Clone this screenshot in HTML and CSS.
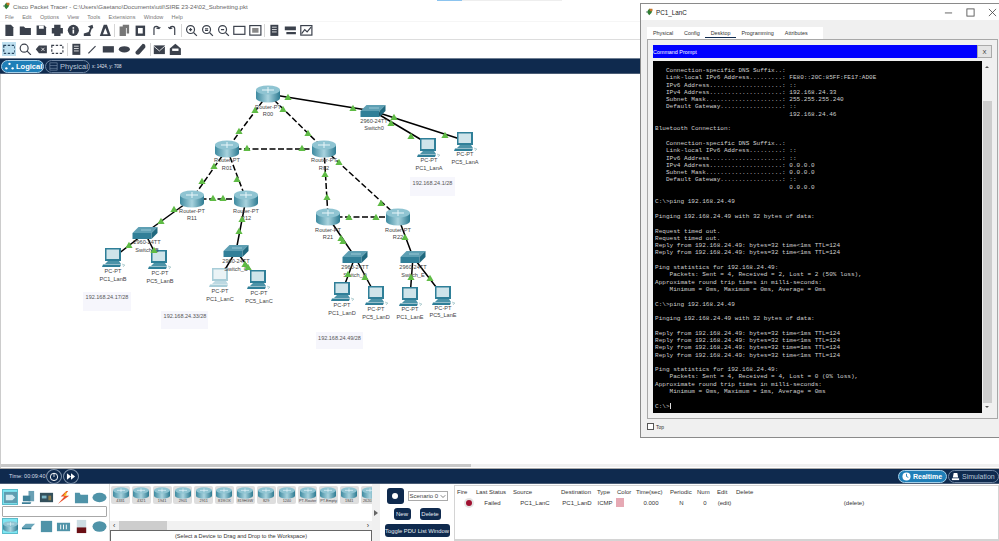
FILE: index.html
```html
<!DOCTYPE html>
<html lang="en">
<head>
<meta charset="utf-8">
<title>Cisco Packet Tracer</title>
<link rel="stylesheet" href="styles.css">
</head>
<body>
<svg class="defs" aria-hidden="true">
  <defs>
    <linearGradient id="rg" x1="0" x2="1" y1="0" y2="0">
      <stop offset="0" stop-color="#3d8aa0"/><stop offset=".5" stop-color="#a9d3de"/><stop offset="1" stop-color="#2d7b92"/>
    </linearGradient>
    <polygon id="tri" points="-3.6,3 0,-3.2 3.6,3" fill="#5fbb45"/>
    <g id="router">
      <path d="M-12-4V4A12 4.6 0 0 0 12 4V-4Z" fill="url(#rg)"/>
      <ellipse cy="-4" rx="12" ry="4.6" fill="#8fc4d2"/>
      <path d="M-6-4H6M0-7V-1" stroke="#e8f6fa" stroke-width="1"/>
    </g>
    <g id="switch">
      <polygon points="-6.500,-6 12.500,-6 6.500,0 -12.500,0" fill="#5e9fb3"/>
      <polygon points="-12.500,0 6.500,0 6.500,6 -12.500,6" fill="#317f98"/>
      <polygon points="6.500,0 12.500,-6 12.500,0 6.500,6" fill="#20697f"/>
      <path d="M-4-3H6" stroke="#a8d2de" stroke-width=".8"/>
    </g>
    <g id="pc">
      <rect x="-8" y="-10" width="16" height="13" fill="#2f7f98"/>
      <rect x="-6.500" y="-8.500" width="12.500" height="9.500" fill="#cfe4ea"/>
      <polygon points="-5,3 6,3 8,6 -8,6" fill="#4c93a8"/>
      <polygon points="-10,6.500 8,6.500 7,9 -11,9" fill="#2f7f98"/>
      <path d="M9 6l3 1-2 2" fill="#dbe9ee" stroke="#7aa" stroke-width=".4"/>
    </g>
    <g id="pcpale">
      <rect x="-8" y="-10" width="16" height="13" fill="#a8cdd8"/>
      <rect x="-6.500" y="-8.500" width="12.500" height="9.500" fill="#eaf3f6"/>
      <polygon points="-5,3 6,3 8,6 -8,6" fill="#bcd9e2"/>
      <polygon points="-10,6.500 8,6.500 7,9 -11,9" fill="#a8cdd8"/>
    </g>
    <symbol id="tile" viewBox="-12 -9 24 18"><use href="#router"/></symbol>
  </defs>
</svg>

<div class="app">
  <div class="titlebar">
    <svg class="appicon" viewBox="0 0 10 10"><path d="M1 5l3-4 4 1-1 4-3 3z" fill="#2e7d32"/><path d="M4 1h4v3H5z" fill="#c9742a"/><path d="M0 4h2v2H0z" fill="#9aa"/></svg>
    <span>Cisco Packet Tracer - C:\Users\Gaetano\Documents\util\SIRE 23-24\02_Subnetting.pkt</span>
    <i class="titleprogress"></i>
  </div>
  <nav class="menu">
    <span>File</span><span>Edit</span><span>Options</span><span>View</span><span>Tools</span><span>Extensions</span><span>Window</span><span>Help</span>
  </nav>
  <div class="toolbar tb-main">
    <svg viewBox="0 0 16 16"><path d="M3 1h7l3 3v11H3z"/></svg>
    <svg viewBox="0 0 16 16"><path d="M1 3h5l2 2h7v9H1z"/></svg>
    <svg viewBox="0 0 16 16"><path d="M2 2h10l2 2v10H2z"/><rect x="5" y="2" width="6" height="4" fill="#fff"/></svg>
    <svg viewBox="0 0 16 16"><path d="M4 1h8v4h3v7h-3v3H4v-3H1V5h3z"/></svg>
    <svg viewBox="0 0 16 16"><circle cx="8" cy="8" r="7"/><rect x="7" y="7" width="2" height="5" fill="#fff"/><rect x="7" y="4" width="2" height="2" fill="#fff"/></svg>
    <svg viewBox="0 0 16 16"><path d="M1 15v-3l6-2 2-5-3-2 6-2 1 4-2 1-2 6 1 3z"/></svg>
    <svg viewBox="0 0 16 16"><path d="M6 1h4l5 14H1z"/><path d="M8 5l3 8H5z" fill="#fff"/></svg>
    <b class="sep"></b>
    <svg viewBox="0 0 16 16"><path d="M2 3h8v12H2zM6 1h8v11h-3V5H6z" fill="#777"/></svg>
    <svg viewBox="0 0 16 16"><path d="M2 2h12v13H2z"/><rect x="5" y="5" width="6" height="7" fill="#fff"/></svg>
    <svg class="line" viewBox="0 0 16 16"><path d="M5 14V6a3 3 0 0 1 6 0M11 6l-3-1M11 6l2-2"/></svg>
    <svg class="line" viewBox="0 0 16 16"><path d="M11 14V6a3 3 0 0 0-6 0M5 6l3-1M5 6L3 4"/></svg>
    <b class="sep"></b>
    <svg class="line" viewBox="0 0 16 16"><circle cx="7" cy="7" r="5"/><path d="M11 11l4 4M5 7h4M7 5v4"/></svg>
    <svg class="line" viewBox="0 0 16 16"><circle cx="7" cy="7" r="5"/><path d="M11 11l4 4M5 6h4M5 8h4"/></svg>
    <svg class="line" viewBox="0 0 16 16"><circle cx="7" cy="7" r="5"/><path d="M11 11l4 4M5 7h4"/></svg>
    <svg class="line" viewBox="0 0 16 16"><rect x="1" y="3" width="14" height="10"/></svg>
    <svg class="line" viewBox="0 0 16 16"><rect x="1" y="2" width="14" height="12"/><rect x="4" y="5" width="8" height="6" fill="#888" stroke="none"/></svg>
    <b class="sep"></b>
    <svg viewBox="0 0 16 16"><path d="M3 1h10v14H3z"/><path d="M5 4h6M5 7h6M5 10h6" stroke="#fff"/></svg>
    <svg viewBox="0 0 16 16"><path d="M1 3h14v5H1zM3 10h12v3H3z"/></svg>
    <svg class="line" viewBox="0 0 16 16"><rect x="1" y="2" width="14" height="12"/><path d="M2 12l4-5 3 3 5-6"/></svg>
  </div>
  <div class="toolbar tb-draw">
    <span class="selected"><svg class="line dash" viewBox="0 0 16 16"><rect x="1" y="3" width="14" height="10"/></svg></span>
    <svg class="line" viewBox="0 0 16 16"><circle cx="6.500" cy="6.500" r="5"/><path d="M10 10l5 5"/></svg>
    <svg viewBox="0 0 16 16"><path d="M5 3h10v10H5L1 8z"/><path d="M8 6l4 4M12 6l-4 4" stroke="#fff"/></svg>
    <svg class="line dash" viewBox="0 0 16 16"><rect x="1" y="3" width="14" height="10"/></svg>
    <b class="sep"></b>
    <svg viewBox="0 0 16 16"><path d="M3 1h10v14H3z"/><path d="M5 4h6M5 7h6M5 10h6" stroke="#fff"/></svg>
    <svg class="line" viewBox="0 0 16 16"><path d="M3 13L12 4"/></svg>
    <svg viewBox="0 0 16 16"><rect x="1" y="4" width="14" height="8"/></svg>
    <svg viewBox="0 0 16 16"><ellipse cx="8" cy="8" rx="7" ry="4"/></svg>
    <svg viewBox="0 0 16 16"><path d="M11 1c3 0 4 3 3 5l-7 8c-2 2-6 0-5-3z"/></svg>
    <b class="sep"></b>
    <svg viewBox="0 0 16 16"><path d="M1 3h14v11H1z"/><path d="M1 4l7 6 7-6" stroke="#fff" fill="none"/></svg>
    <svg viewBox="0 0 16 16"><path d="M1 7l7-6 7 6v8H1z"/><path d="M4 7h8v3H4z" fill="#fff"/></svg>
  </div>
  <div class="navbar">
    <span class="pill pill-on"><svg viewBox="0 0 10 10"><circle cx="5" cy="2" r="1.300"/><circle cx="1.500" cy="7" r="1.300"/><circle cx="8.500" cy="7" r="1.300"/></svg>Logical</span>
    <span class="pill pill-off"><svg viewBox="0 0 10 10"><rect x="1" y="1" width="8" height="8" fill="none" stroke="#8fa4bd" stroke-width=".6"/><path d="M1 4h8M1 7h8" stroke="#8fa4bd" stroke-width=".6"/></svg>Physical</span>
    <span class="coords">x: 1424, y: 708</span>
  </div>

  <main class="canvas">
    <svg class="diagram" viewBox="0 75 640 390" role="img" aria-label="Network topology">
      <g class="notes">
        <rect x="410" y="178" width="45" height="19"/>
        <rect x="83" y="293" width="48" height="19"/>
        <rect x="161" y="312" width="47" height="18"/>
        <rect x="316" y="333" width="47" height="17"/>
      </g>
      <g class="solid">
        <path d="M268 95L373 112M373 112L425 143M373 112L460 140"/>
        <path d="M192 200L145 234M145 234L113 259M145 234L159 262"/>
        <path d="M246 200L236 252M236 252L220 279M236 252L258 281"/>
        <path d="M328 218L355 258M355 258L342 293M355 258L376 297"/>
        <path d="M398 218L413 258M413 258L410 298M413 258L443 297"/>
      </g>
      <g class="dashed">
        <path d="M268 95L227 150M268 95L324 150M227 150L324 150"/>
        <path d="M227 150L192 200M227 150L246 200M192 200L246 200"/>
        <path d="M324 150L328 218M324 150L398 218M328 218L398 218"/>
      </g>
      <use href="#router" x="268" y="95"/><use href="#router" x="227" y="150"/><use href="#router" x="324" y="150"/>
      <use href="#router" x="192" y="200"/><use href="#router" x="246" y="200"/><use href="#router" x="328" y="218"/><use href="#router" x="398" y="218"/>
      <use href="#switch" x="373" y="112"/><use href="#switch" x="145" y="234"/><use href="#switch" x="236" y="252"/><use href="#switch" x="355" y="258"/><use href="#switch" x="413" y="258"/>
      <use href="#pc" x="428" y="149"/><use href="#pc" x="465" y="143"/><use href="#pc" x="113" y="259"/><use href="#pc" x="159" y="261"/>
      <use href="#pcpale" x="220" y="279"/><use href="#pc" x="258" y="281"/><use href="#pc" x="342" y="293"/><use href="#pc" x="376" y="297"/><use href="#pc" x="410" y="298"/><use href="#pc" x="443" y="297"/>
      <g class="labels">
        <text x="268" y="110">Router-PT</text><text x="268" y="117">R00</text>
        <text x="227" y="163">Router-PT</text><text x="227" y="171">R01</text>
        <text x="324" y="163">Router-PT</text><text x="324" y="171">R02</text>
        <text x="192" y="214">Router-PT</text><text x="192" y="221">R11</text>
        <text x="246" y="214">Router-PT</text><text x="246" y="221">R12</text>
        <text x="328" y="233">Router-PT</text><text x="328" y="240">R21</text>
        <text x="398" y="233">Router-PT</text><text x="398" y="240">R22</text>
        <text x="374" y="124">2960-24TT</text><text x="374" y="131">Switch0</text>
        <text x="147" y="245">2960-24TT</text><text x="147" y="253">Switch_B</text>
        <text x="236" y="264">2960-24TT</text><text x="236" y="272">Switch_C</text>
        <text x="355" y="270">2960-24TT</text><text x="355" y="278">Switch_D</text>
        <text x="413" y="270">2960-24TT</text><text x="413" y="278">Switch_E</text>
        <text x="429" y="163">PC-PT</text><text x="429" y="171">PC1_LanA</text>
        <text x="465" y="157">PC-PT</text><text x="465" y="165">PC5_LanA</text>
        <text x="113" y="274">PC-PT</text><text x="113" y="282">PC1_LanB</text>
        <text x="160" y="276">PC-PT</text><text x="160" y="284">PC5_LanB</text>
        <text x="220" y="294">PC-PT</text><text x="220" y="302">PC1_LanC</text>
        <text x="259" y="296">PC-PT</text><text x="259" y="304">PC5_LanC</text>
        <text x="342" y="308">PC-PT</text><text x="342" y="316">PC1_LanD</text>
        <text x="376" y="312">PC-PT</text><text x="376" y="320">PC5_LanD</text>
        <text x="410" y="312">PC-PT</text><text x="410" y="320">PC1_LanE</text>
        <text x="443" y="311">PC-PT</text><text x="443" y="318">PC5_LanE</text>
        <text class="note" x="432.500" y="186">192.168.24.1/28</text>
        <text class="note" x="107" y="300">192.168.24.17/28</text>
        <text class="note" x="185" y="319">192.168.24.33/28</text>
        <text class="note" x="339.500" y="341">192.168.24.49/28</text>
      </g>
      <use href="#tri" x="288" y="98"/><use href="#tri" x="353" y="109"/><use href="#tri" x="391" y="124"/><use href="#tri" x="411" y="137"/><use href="#tri" x="394" y="118"/><use href="#tri" x="445" y="136"/>
      <use href="#tri" x="255" y="111"/><use href="#tri" x="239" y="132"/><use href="#tri" x="283" y="110"/><use href="#tri" x="308" y="134"/>
      <use href="#tri" x="247" y="149"/><use href="#tri" x="302" y="149"/><use href="#tri" x="214" y="167"/><use href="#tri" x="202" y="182"/><use href="#tri" x="237" y="180"/>
      <use href="#tri" x="213" y="199"/><use href="#tri" x="223" y="199"/><use href="#tri" x="325" y="175"/><use href="#tri" x="327" y="198"/><use href="#tri" x="339" y="163"/><use href="#tri" x="381" y="204"/>
      <use href="#tri" x="349" y="218"/><use href="#tri" x="376" y="218"/><use href="#tri" x="174" y="210"/><use href="#tri" x="161" y="222"/><use href="#tri" x="129" y="246"/><use href="#tri" x="154" y="251"/>
      <use href="#tri" x="242" y="220"/><use href="#tri" x="239" y="232"/><use href="#tri" x="245" y="265"/><use href="#tri" x="248" y="268"/>
      <use href="#tri" x="341" y="239"/><use href="#tri" x="343" y="242"/><use href="#tri" x="348" y="275"/><use href="#tri" x="365" y="278"/><use href="#tri" x="405" y="238"/><use href="#tri" x="411" y="278"/><use href="#tri" x="430" y="279"/>
    </svg>
    <div class="canvas-scroll"></div>
  </main>

  <div class="navbar navbar-low">
    <span class="time">Time: 00:09:40</span>
    <span class="round"><svg viewBox="0 0 16 16"><circle cx="8" cy="8.500" r="4.500" fill="none" stroke="#fff" stroke-width="1.200"/><path d="M8 4v4.500" stroke="#fff"/></svg></span>
    <span class="round"><svg viewBox="0 0 16 16"><path d="M3 4l5 4-5 4zM8 4l5 4-5 4z" fill="#fff"/></svg></span>
    <span class="modes">
      <span class="pill pill-on"><svg viewBox="0 0 10 10"><circle cx="5" cy="5" r="4.500" fill="#fff"/><path d="M5 2v3l2 1" stroke="#1f7fb8" fill="none"/></svg>Realtime</span>
      <span class="pill pill-off"><svg viewBox="0 0 10 10"><path d="M3 1h4l1 5H2z" fill="#fff"/><rect x="1" y="7" width="8" height="2" fill="#fff"/></svg>Simulation</span>
    </span>
  </div>

  <footer class="bottom">
    <div class="palette">
      <div class="iconrow">
        <span class="sel"><svg viewBox="0 0 16 16"><rect x="1" y="2" width="14" height="12" fill="#5f9db0"/><path d="M3 5h7l3 3-3 3H3z" fill="#cfe8ef"/></svg></span>
        <svg viewBox="0 0 16 16"><rect x="8" y="1" width="6" height="11" fill="#6aa0b4"/><rect x="2" y="6" width="8" height="6" fill="#3d7f97"/><path d="M1 13h10l-1 2H1z" fill="#3d7f97"/></svg>
        <svg viewBox="0 0 16 16"><rect x="1" y="3" width="14" height="10" fill="#33505c"/><path d="M3 6h5v3H3z" fill="#7db6c6"/><path d="M10 6h3v5h-3z" fill="#8a7a4c"/></svg>
        <svg viewBox="0 0 16 16"><path d="M11 1L5 7h4l-7 8 12-9H9l4-5z" fill="#e8502c"/><path d="M11 1L8 6h3z" fill="#f6c21c"/></svg>
        <svg viewBox="0 0 16 16"><path d="M1 3h5l1 2h8v9H1z" fill="#4f93a8"/></svg>
        <svg viewBox="0 0 16 16"><ellipse cx="8" cy="8" rx="7.500" ry="5" fill="#4f93a8"/></svg>
      </div>
      <div class="search"></div>
      <div class="iconrow">
        <span class="sel"><svg viewBox="-12 -9 24 18"><use href="#router"/></svg></span>
        <svg viewBox="0 0 16 16"><path d="M5 5h10l-4 4H1z" fill="#6aa6ba"/><path d="M1 9h10v2H1z" fill="#2f7d96"/></svg>
        <svg viewBox="0 0 16 16"><rect x="2" y="2" width="12" height="12" fill="#4f93a8"/></svg>
        <svg viewBox="0 0 16 16"><rect x="1" y="4" width="14" height="9" fill="#4f93a8"/><path d="M5 6v5M8 6v5M11 6v5" stroke="#fff"/></svg>
        <svg viewBox="0 0 16 16"><rect x="3" y="1" width="10" height="14" fill="#ccdde3"/><rect x="3" y="9" width="10" height="6" fill="#6a0f14"/></svg>
        <svg viewBox="0 0 16 16"><ellipse cx="8" cy="8" rx="7.500" ry="5.500" fill="#4f93a8"/></svg>
      </div>
    </div>
    <div class="devices">
      <div class="strip">
        <div class="tile"><svg><use href="#tile"/></svg><span>4331</span></div>
        <div class="tile"><svg><use href="#tile"/></svg><span>4321</span></div>
        <div class="tile"><svg><use href="#tile"/></svg><span>1941</span></div>
        <div class="tile"><svg><use href="#tile"/></svg><span>2901</span></div>
        <div class="tile"><svg><use href="#tile"/></svg><span>2911</span></div>
        <div class="tile"><svg><use href="#tile"/></svg><span>819IOX</span></div>
        <div class="tile"><svg><use href="#tile"/></svg><span>819HGW</span></div>
        <div class="tile"><svg><use href="#tile"/></svg><span>829</span></div>
        <div class="tile"><svg><use href="#tile"/></svg><span>1240</span></div>
        <div class="tile"><svg><use href="#tile"/></svg><span>PT-Router</span></div>
        <div class="tile"><svg><use href="#tile"/></svg><span>PT-Empty</span></div>
        <div class="tile"><svg><use href="#tile"/></svg><span>1841</span></div>
        <div class="tile"><svg><use href="#tile"/></svg><span>2620XM</span></div>
      </div>
      <div class="hscroll"><span class="arrow">&lsaquo;</span><i></i><span class="arrow">&rsaquo;</span></div>
      <div class="caption">(Select a Device to Drag and Drop to the Workspace)</div>
    </div>
    <div class="expander"><span></span></div>
    <div class="scenario">
      <div class="scenario-top">
        <span class="newpdu"><i></i></span>
        <span class="select">Scenario 0<svg viewBox="0 0 8 8"><path d="M1 3l3 3 3-3" fill="none" stroke="#555"/></svg></span>
      </div>
      <div class="scenario-btns"><span class="btn btn-new">New</span><span class="btn btn-del">Delete</span></div>
      <span class="btn btn-wide">Toggle PDU List Window</span>
    </div>
    <div class="pdus">
      <div class="pdu-row pdu-head">
        <span>Fire</span><span>Last Status</span><span>Source</span><span>Destination</span><span>Type</span><span>Color</span><span>Time(sec)</span><span>Periodic</span><span>Num</span><span>Edit</span><span>Delete</span>
      </div>
      <div class="pdu-row pdu-body">
        <span class="fire"><i></i></span><span>Failed</span><span>PC1_LanC</span><span>PC1_LanD</span><span>ICMP</span><span class="swatch"><i></i></span><span>0.000</span><span>N</span><span>0</span><span>(edit)</span><span>(delete)</span>
      </div>
    </div>
  </footer>

  <section class="window">
    <header class="win-title">
      <svg class="appicon" viewBox="0 0 10 10"><path d="M1 5l3-4 4 1-1 4-3 3z" fill="#2e7d32"/><path d="M4 1h4v3H5z" fill="#c9742a"/><path d="M0 4h2v2H0z" fill="#9aa"/></svg>
      <span class="win-name">PC1_LanC</span>
      <span class="win-ctrls">
        <svg viewBox="0 0 10 10"><path d="M1 5.500h8"/></svg>
        <svg viewBox="0 0 10 10"><rect x="1" y="1" width="8" height="8"/></svg>
        <svg viewBox="0 0 10 10"><path d="M1 1l8 8M9 1l-8 8"/></svg>
      </span>
    </header>
    <div class="tabs">
      <span>Physical</span><span>Config</span><span class="tab-on">Desktop</span><span>Programming</span><span>Attributes</span>
    </div>
    <div class="panel">
      <div class="cmdbar"><span>Command Prompt</span><b>X</b></div>
      <div class="termwrap">
<pre class="term">   Connection-specific DNS Suffix..:
   Link-local IPv6 Address.........: FE80::20C:85FF:FE17:AD0E
   IPv6 Address....................: ::
   IPv4 Address....................: 192.168.24.33
   Subnet Mask.....................: 255.255.255.240
   Default Gateway.................: ::
                                     192.168.24.46

Bluetooth Connection:

   Connection-specific DNS Suffix..:
   Link-local IPv6 Address.........: ::
   IPv6 Address....................: ::
   IPv4 Address....................: 0.0.0.0
   Subnet Mask.....................: 0.0.0.0
   Default Gateway.................: ::
                                     0.0.0.0

C:\&gt;ping 192.168.24.49

Pinging 192.168.24.49 with 32 bytes of data:

Request timed out.
Request timed out.
Reply from 192.168.24.49: bytes=32 time&lt;1ms TTL=124
Reply from 192.168.24.49: bytes=32 time&lt;1ms TTL=124

Ping statistics for 192.168.24.49:
    Packets: Sent = 4, Received = 2, Lost = 2 (50% loss),
Approximate round trip times in milli-seconds:
    Minimum = 0ms, Maximum = 0ms, Average = 0ms

C:\&gt;ping 192.168.24.49

Pinging 192.168.24.49 with 32 bytes of data:

Reply from 192.168.24.49: bytes=32 time&lt;1ms TTL=124
Reply from 192.168.24.49: bytes=32 time&lt;1ms TTL=124
Reply from 192.168.24.49: bytes=32 time=1ms TTL=124
Reply from 192.168.24.49: bytes=32 time&lt;1ms TTL=124

Ping statistics for 192.168.24.49:
    Packets: Sent = 4, Received = 4, Lost = 0 (0% loss),
Approximate round trip times in milli-seconds:
    Minimum = 0ms, Maximum = 1ms, Average = 0ms

C:\&gt;<i class="caret"></i></pre>
        <div class="vscroll"><span class="up"></span><i></i><span class="down"></span></div>
      </div>
    </div>
    <label class="topcheck"><i></i>Top</label>
  </section>
</div>
</body>
</html>
```
FILE: styles.css
```css
* { box-sizing: border-box; }
html, body { margin: 0; padding: 0; background: #fff; }
body { font-family: "Liberation Sans", Arial, sans-serif; color: #444; }
.defs { position: absolute; width: 0; height: 0; }

.app {
  position: relative;
  width: 999px;
  height: 541px;
  overflow: hidden;
  display: flex;
  flex-direction: column;
  background: #fff;
}

.titlebar {
  height: 11px;
  display: flex;
  align-items: center;
  gap: 2px;
  padding: 1px 0 0 3px;
  font-size: 6.100px;
  color: #666;
  position: relative;
}
.appicon { width: 8px; height: 8px; flex: none; }
.titleprogress {
  position: absolute;
  left: 437px;
  top: 0;
  width: 125px;
  height: 1px;
  background: linear-gradient(90deg, #8cc4ef 0 25px, #eee 25px);
}

.menu {
  height: 11px;
  display: flex;
  align-items: center;
  gap: 8.300px;
  padding: 1px 0 0 5px;
  font-size: 5.500px;
  color: #777;
  border-bottom: 1px solid #f6f6f6;
}

.toolbar {
  display: flex;
  align-items: center;
  gap: 3.300px;
  padding-left: 3px;
}
.toolbar svg { width: 12.700px; height: 12.700px; flex: none; fill: #3b414c; stroke: none; }
.toolbar svg.line { fill: none; stroke: #3b414c; stroke-width: 1.500; }
.toolbar svg.dash { stroke-dasharray: 3 2; }
.tb-main { height: 18px; border-bottom: 1px solid #ddd; }
.tb-draw { height: 18px; padding-left: 2px; }
.selected { width: 14px; height: 14px; display: flex; align-items: center; justify-content: center; background: #bfe0f0; flex: none; }
.selected svg.line { stroke: #27455f; }
.sep { width: 1px; height: 13px; background: #d5d5d5; flex: none; margin: 0 -.6px; }

.navbar {
  height: 16px;
  background: #0f2a4e;
  border-top: 1px solid #6f7f93;
  border-bottom: 1px solid #4a5c75;
  display: flex;
  align-items: center;
  padding-left: 1px;
  gap: 1px;
  flex: none;
}
.pill {
  height: 13px;
  border-radius: 7px;
  display: flex;
  align-items: center;
  gap: 2px;
  padding: 0 2px 0 3px;
  font-size: 7.500px;
  white-space: nowrap;
}
.pill svg { width: 9px; height: 9px; flex: none; fill: #fff; }
.pill-on { background: #1f7fb8; color: #fff; border: 1px solid #a8d0e8; font-weight: bold; width: 43px; }
.pill-off { color: #b7c5d6; border: 1px solid #6f86a3; width: 45px; }
.coords { font-size: 4.500px; color: #e4e9ef; margin-left: 1px; }

.canvas { flex: 1; min-height: 0; border-left: 1px solid #ccc; overflow: hidden; display: flex; flex-direction: column; }
.diagram { display: block; width: 640px; height: 390px; margin-left: -1px; flex: none; }
.canvas-scroll { flex: none; height: 3px; background: linear-gradient(90deg, #c8c8c8 0 470px, #f0f0f0 470px); }
.solid path { fill: none; stroke: #000; stroke-width: 1.500; }
.dashed path { fill: none; stroke: #000; stroke-width: 1.500; stroke-dasharray: 6 2.500; }
.notes rect { fill: #f6f6fc; }
.labels text { font-size: 5.600px; fill: #444; text-anchor: middle; }
.labels .note { font-size: 5.500px; fill: #555; }

.navbar-low { padding-left: 9px; gap: 0; position: relative; border-top-color: #aaa; }
.time { font-size: 5.500px; color: #d8dfe8; width: 36px; white-space: nowrap; }
.round { width: 16px; height: 15px; border-radius: 50%; border: 1px solid #7f92aa; margin-left: 1px; display: flex; }
.round svg { width: 100%; height: 100%; }
.modes { display: flex; gap: 1px; margin-left: auto; }
.modes .pill-on { width: 49px; font-size: 7px; }
.modes .pill-off { width: 51px; font-size: 7px; padding-left: 2px; }

.bottom {
  height: 57px;
  flex: none;
  display: grid;
  grid-template-columns: 109px 263px 8px 74px 1fr;
  background: #fff;
}
.palette { display: flex; flex-direction: column; padding: 5px 2px 0 2px; gap: 1px; }
.iconrow { display: flex; justify-content: space-between; align-items: center; height: 16px; }
.iconrow svg { width: 15px; height: 15px; flex: none; }
.sel { width: 16px; height: 16px; background: #7fe6f2; border: 1px solid #5bbccb; display: flex; flex: none; }
.search { height: 11px; border: 1px solid #a8a8a8; border-radius: 1px; background: #fff; }

.devices { display: flex; flex-direction: column; border-left: 1px solid #ddd; min-width: 0; }
.strip { height: 37px; display: flex; gap: 1.800px; padding: 2px 0 0 1px; overflow: hidden; }
.tile {
  width: 19px;
  height: 18px;
  flex: none;
  background: #dedede;
  border-radius: 2px;
  display: flex;
  flex-direction: column;
  align-items: center;
}
.tile svg { width: 16px; height: 12px; margin-top: 1px; flex: none; }
.tile span { font-size: 3.800px; line-height: 4px; color: #444; white-space: nowrap; }
.hscroll { height: 9px; display: flex; align-items: center; background: #f1f1f1; font-size: 7px; color: #333; justify-content: space-between; position: relative; padding: 0 3px; }
.hscroll i { position: absolute; left: 9px; top: 0; width: 48px; height: 9px; background: #cdcdcd; }
.arrow { line-height: 9px; }
.caption {
  height: 11px;
  border: 1px solid #666;
  border-bottom: 0;
  font-size: 5.600px;
  line-height: 10px;
  text-align: center;
  color: #333;
  white-space: nowrap;
}

.expander { background: #f0f0f0; display: flex; align-items: center; justify-content: center; }
.expander span { width: 0; height: 0; border-left: 4px solid #666; border-top: 3px solid transparent; border-bottom: 3px solid transparent; }

.scenario { display: flex; flex-direction: column; align-items: center; padding-top: 4px; background: #fff; }
.scenario-top { display: flex; align-items: center; gap: 4px; height: 16px; }
.newpdu { width: 17px; height: 16px; background: #0f2a4e; border-radius: 3px; display: flex; align-items: center; justify-content: center; flex: none; }
.newpdu i { width: 6px; height: 6px; border-radius: 50%; background: #fff; }
.select { width: 40px; height: 10px; border: 1px solid #aaa; font-size: 6px; display: flex; align-items: center; justify-content: space-between; padding: 0 1px; white-space: nowrap; flex: none; }
.select svg { width: 6px; height: 6px; flex: none; }
.scenario-btns { display: flex; gap: 9px; margin-top: 4px; }
.btn { background: #0f2a4e; color: #e6ebf1; border-radius: 3px; font-size: 6px; height: 12px; display: flex; align-items: center; justify-content: center; white-space: nowrap; }
.btn-new { width: 17px; }
.btn-del { width: 21px; }
.btn-wide { width: 65px; height: 13px; margin-top: 4px; font-size: 5.800px; }

.pdus { border: 1px solid #d4d4d4; border-bottom-width: 2px; margin: 1px 0 0 0; padding-top: 2px; }
.pdu-row {
  display: grid;
  grid-template-columns: 19px 37px 48px 36px 20px 19px 34px 27px 20px 19px 240px;
  font-size: 6px;
  color: #333;
  white-space: nowrap;
}
.pdu-head { height: 9px; line-height: 9px; padding-left: 2px; }
.pdu-body { height: 11px; align-items: center; text-align: center; }
.fire { display: flex; justify-content: flex-end; padding-right: 2px; }
.fire i { width: 6px; height: 6px; border-radius: 50%; background: #a01030; box-shadow: 0 0 0 2px #e4e4e4; }
.swatch i { display: block; width: 8px; height: 9px; margin-left: 1px; background: #e6a9b4; }

.window {
  position: absolute;
  left: 640px;
  top: 3px;
  width: 359px;
  height: 435px;
  background: #f0f0f0;
  border: 1px solid #8a8a8a;
  border-right: 0;
  display: flex;
  flex-direction: column;
}
.win-title { height: 16px; background: #fff; display: flex; align-items: center; padding-left: 5px; flex: none; }
.win-title .appicon { width: 8px; height: 8px; }
.win-name { font-size: 6.300px; margin-left: 2px; color: #222; }
.win-ctrls { margin-left: auto; display: flex; gap: 13px; padding-right: 2px; }
.win-ctrls svg { width: 9px; height: 9px; fill: none; stroke: #444; stroke-width: .9; }
.tabs {
  margin: 7px 0 0 6px;
  width: 176px;
  height: 12px;
  background: #fff;
  display: flex;
  align-items: center;
  gap: 11px;
  padding-left: 6px;
  font-size: 5.400px;
  color: #333;
  flex: none;
}
.tab-on { position: relative; }
.tab-on::after { content: ""; position: absolute; left: -6px; right: -6px; top: 7px; height: 1px; background: #0f2a4e; }
.panel {
  margin: 0 1px 0 6px;
  height: 380px;
  flex: none;
  background: #f0f0f0;
  border: 1px solid #a8a8a8;
  padding: 5px;
  display: flex;
  flex-direction: column;
  gap: 3px;
}
.cmdbar { height: 13px; background: #00f; color: #fff; font-size: 5.400px; display: flex; align-items: center; flex: none; }
.cmdbar b { margin-left: auto; width: 15px; height: 13px; background: #e4e4e4; border: 1px solid #aaa; color: #333; font-weight: normal; font-size: 6px; display: flex; align-items: center; justify-content: center; }
.termwrap { flex: 1; min-height: 0; display: flex; }
.term {
  margin: 0;
  flex: 1;
  height: 100%;
  background: #000;
  color: #cfcfcf;
  font-family: "Liberation Mono", "Courier New", monospace;
  font-size: 6.050px;
  line-height: 7.290px;
  padding: 6px 0 0 2px;
  overflow: hidden;
}
.caret { display: inline-block; width: 1px; height: 6px; background: #ddd; vertical-align: -1px; }
.vscroll { width: 10px; flex: none; background: #f0f0f0; display: flex; flex-direction: column; align-items: center; padding: 3px 0 3px; }
.vscroll i { flex: 1; width: 9px; margin: 33px 0 3px; background: #cdcdcd; }
.up { width: 0; height: 0; border: 2px solid transparent; border-bottom-color: #555; }
.down { width: 0; height: 0; border: 2px solid transparent; border-top-color: #555; }
.topcheck { display: flex; align-items: center; gap: 2px; font-size: 5px; margin: 4px 0 0 6px; color: #333; }
.topcheck i { width: 7px; height: 7px; background: #fff; border: 1px solid #555; }
```
